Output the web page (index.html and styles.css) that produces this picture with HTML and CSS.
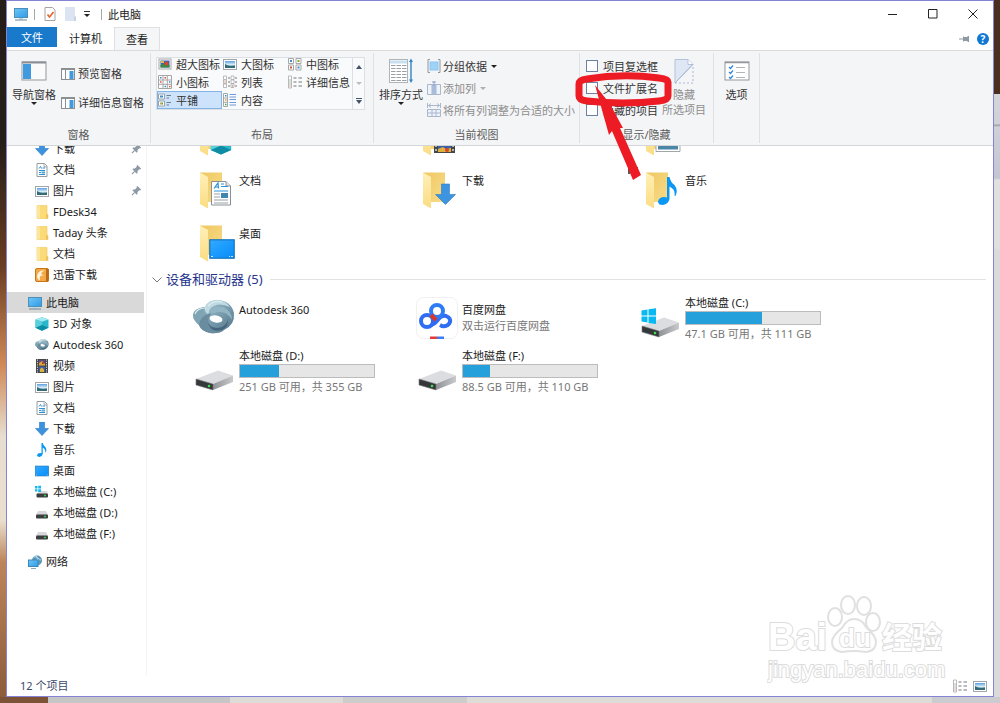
FILE: index.html
```
<!DOCTYPE html>
<html lang="zh-CN">
  <head>
    <meta charset="UTF-8" />
    <meta name="viewport" content="width=device-width, initial-scale=1.0" />
    <title>此电脑</title>
    <link rel="stylesheet" href="styles.css">
  </head>
  <body>
    <!-- Icon sprite -->
    <svg class="sprite" width="0" height="0" aria-hidden="true">
      <defs>
        <linearGradient id="gBlue" x1="0" y1="0" x2="1" y2="1">
          <stop offset="0" stop-color="#6fc6f7" /><stop offset="1" stop-color="#2f9be6" />
        </linearGradient>
        <linearGradient id="gDesk" x1="0" y1="0" x2="1" y2="1">
          <stop offset="0" stop-color="#35aaff" /><stop offset=".5" stop-color="#1a9bff" /><stop offset="1" stop-color="#0a8cf5" />
        </linearGradient>
        <linearGradient id="gFlap" x1="0" y1="0" x2="0" y2="1">
          <stop offset="0" stop-color="#fff0b8" /><stop offset="1" stop-color="#fbdc82" />
        </linearGradient>
        <linearGradient id="gBack" x1="0" y1="0" x2="1" y2="1">
          <stop offset="0" stop-color="#eec762" /><stop offset="1" stop-color="#f9dc88" />
        </linearGradient>
        <linearGradient id="gSteel" x1="0" y1="0" x2="1" y2="1">
          <stop offset="0" stop-color="#b9d5df" /><stop offset=".5" stop-color="#7da2b2" /><stop offset="1" stop-color="#4f7186" />
        </linearGradient>
        <linearGradient id="gSky" x1="0" y1="0" x2="0" y2="1">
          <stop offset="0" stop-color="#5b9fe3" /><stop offset=".5" stop-color="#d3ecf8" /><stop offset="1" stop-color="#3d6f74" />
        </linearGradient>
        <linearGradient id="gSide" x1="0" y1="0" x2="1" y2="0">
          <stop offset="0" stop-color="#8f9296" /><stop offset="1" stop-color="#c8cacc" />
        </linearGradient>
      </defs>

      <symbol id="pc" viewBox="0 0 14 14">
        <rect x="0.5" y="1.5" width="13" height="9" fill="url(#gBlue)" stroke="#4c8fb8" />
        <path d="M5 11h4v1.500H5z" fill="#b9d8ea" /><path d="M1 13h12" stroke="#6f8795" />
      </symbol>
      <symbol id="pin" viewBox="0 0 12 12">
        <path d="M7 1l4 4-1 1-1-.3L7 7.800l.2 1.700-1 1L1.500 5.800l1-1 1.700.2L6.300 3 6 2z" fill="#8d99a5" />
        <path d="M4 8L1 11" stroke="#8d99a5" stroke-width="1.200" />
      </symbol>
      <symbol id="doc" viewBox="0 0 14 14">
        <path d="M2 .5h7.500L12 3v10.500H2z" fill="#fff" stroke="#959ca1" />
        <path d="M9 1v3h3" fill="#e4e7e9" stroke="#959ca1" stroke-width=".7" />
        <path d="M4 5.500l1.500-2 1 2M7.500 5H10M4 7.500h6M4 9.500h2M4 11.500h6" stroke="#2f8fd0" fill="none" />
        <path d="M6.500 8.500h3.500v2H6.500z" fill="#4fa6d8" />
      </symbol>
      <symbol id="pic" viewBox="0 0 14 14">
        <rect x=".5" y="2.500" width="13" height="10" fill="#fff" stroke="#a3a6a8" />
        <rect x="2" y="4" width="10" height="7" fill="url(#gSky)" />
        <path d="M2 7l3 1.500 3 .5 4-.5V11H2z" fill="#356a78" />
      </symbol>
      <symbol id="fold" viewBox="0 0 14 14">
        <path d="M2 .5h10V9l1 .5v4H2z" fill="#fbdb77" stroke="#f0c858" stroke-width=".6" />
        <path d="M2 .5h3v13H2z" fill="#fde69b" /><path d="M11 9.500h2v4h-2z" fill="#eec15a" />
      </symbol>
      <symbol id="thunder" viewBox="0 0 14 14">
        <rect x=".5" y=".5" width="13" height="13" rx="1.500" fill="#f3a948" stroke="#c77717" />
        <path d="M11 1h2.500v12.500H11z" fill="#b96b16" />
        <path d="M9.500 2.500Q3 2 2 8q0 3 3 4.500Q4 9 6 7.500h3Q6.500 6.500 6 5.500 7 3.500 9.500 2.500z" fill="#fff5dc" />
      </symbol>
      <symbol id="cube" viewBox="0 0 14 14">
        <path d="M7 .3L13.500 2.500v8.300L7 13.700.5 10.800V2.500z" fill="#29b7cc" />
        <path d="M7 .3L13.500 2.500 7 4.800.5 2.500z" fill="#a5eaf0" />
        <path d="M.5 2.500L7 4.800v8.900L.5 10.800z" fill="#57d0dd" /><path d="M.5 10.800L7 8l6.500 2.800L7 13.700z" fill="#0d8ca4" />
      </symbol>
      <symbol id="adsk" viewBox="0 0 42 42">
        <path d="M0 18Q1 11 12 10 15 3 25 3q13 1 16 13 1 12-10 17-4 4-14 3-9-2-11-8Q0 23 0 18z" fill="url(#gSteel)" />
        <path d="M0 18Q1 11 12 10q-2 5 2 8-6 2-8 10Q0 23 0 18z" fill="#7fa5b4" />
        <path d="M12 10Q15 3 25 3q8 1 12 7Q24 4 17 12q-2 3 0 6-6-2-5-8z" fill="#bfdae3" />
        <path d="M15 17Q18 8 30 10q9 4 9 13Q34 14 26 15q-5 0-9 4z" fill="#93b5c3" />
        <path d="M6 28q1-10 13-12-6 6-2 12 5 5 14 3-3 6-14 5-9-2-11-8z" fill="#6a8c9f" />
        <path d="M15 26q4 7 14 4 6-3 6-9 1 9-6 12-11 3-14-7z" fill="#45667c" />
        <ellipse cx="23" cy="22" rx="6.500" ry="3.500" fill="#fff" transform="rotate(10 23 22)" />
        <path d="M2 17q2-6 11-6M15 9q6-6 14-4" stroke="#e2f0f4" stroke-width="1.200" fill="none" />
      </symbol>
      <symbol id="film" viewBox="0 0 14 14">
        <rect x="1" y="0" width="12" height="14" fill="#45464a" />
        <path d="M2.500 .5v13M11.500 .5v13" stroke="#d5d6d8" stroke-dasharray="1.200 1.200" />
        <path d="M4 1h6v5.500H4z" fill="#5d4b88" /><path d="M4 7.500h6V13H4z" fill="#3b5fa8" />
        <path d="M4 4l3-2 3 3v1.500H4z" fill="#d8a82e" /><path d="M5 10l2-1.500 2 2V13H5z" fill="#e0b13a" /><path d="M7 3h2v2H7z" fill="#c63d2f" />
      </symbol>
      <symbol id="down" viewBox="0 0 14 14">
        <path d="M4.500 0h5v6.500h4L7 13.500.5 6.500h4z" fill="#3d92dd" stroke="#2c7cc4" stroke-width=".6" />
      </symbol>
      <symbol id="note" viewBox="0 0 20 28">
        <path d="M9 0h2.500q1 5 5 8 4 5 1 11l-1-.5q1-6-5-9V22q-1 5-6.500 6Q0 28 0 24.500 1 20 6 20q2 0 3 .5z" fill="#0b98f5" />
      </symbol>
      <symbol id="desk" viewBox="0 0 26 20">
        <rect x=".8" y=".8" width="24.400" height="18.400" fill="url(#gDesk)" stroke="#1574bd" stroke-width="1.200" />
        <path d="M2 17.500h2M20 17.500h1M22 17.500h2" stroke="#bfe6ff" />
      </symbol>
      <symbol id="sdrive" viewBox="0 0 14 14">
        <path d="M3 5h8l2 4H1z" fill="#d6d8da" /><rect x="1" y="8.500" width="12" height="4" rx="1" fill="#3b3d40" />
        <path d="M9 10.500h2" stroke="#35d044" stroke-width="1.400" />
      </symbol>
      <symbol id="sdrivec" viewBox="0 0 14 14">
        <path d="M4 6h8l1 3H2z" fill="#d6d8da" /><rect x="1.500" y="8.500" width="11.500" height="4" rx="1" fill="#3b3d40" />
        <path d="M9 10.500h2" stroke="#35d044" stroke-width="1.400" />
        <path d="M0 1h2.500v2.500H0zM3.200.8H6v2.700H3.200zM0 4.200h2.500v2.400H0zM3.200 4.200H6V7H3.200z" fill="#16b9ee" />
      </symbol>
      <symbol id="net" viewBox="0 0 14 14">
        <circle cx="9" cy="5.500" r="5" fill="#5a97b8" /><path d="M6 2q3-1 4 1t3 2M8 0q3 5 1 10" stroke="#b6dceb" fill="none" />
        <rect x=".5" y="5" width="9.500" height="6.500" fill="url(#gBlue)" stroke="#3c87bb" /><path d="M3 13.500h5" stroke="#8fa7b3" />
      </symbol>

      <symbol id="bigfolder" viewBox="0 0 42 42">
        <path d="M7 4.500h22V34H12z" fill="url(#gBack)" /><path d="M7 4.500L15 9v31.500L7 36z" fill="url(#gFlap)" />
      </symbol>
      <symbol id="bigdrive" viewBox="0 0 42 42">
        <path d="M3 29l22-8.500 15 5L20 34z" fill="#dcdde0" />
        <path d="M20 34l20-8.500V32L20 40z" fill="url(#gSide)" />
        <path d="M3 29l17 5v6L3 35z" fill="#35383b" stroke="#777" stroke-width=".6" />
        <circle cx="16" cy="36" r="1.300" fill="#3fe04c" />
      </symbol>

      <!-- Ribbon icons -->
      <symbol id="thumb" viewBox="0 0 14 14">
        <path d="M.5 1.500h5v5h-5zM.5 8h5v5h-5zM8 1.500h5v5H8zM8 8h5v5H8z" fill="#fff" stroke="#a6a6a6" />
        <path d="M2 3h2v2H2zM9.500 9.500h2v2h-2z" fill="#3a8fc8" /><path d="M2 9.500h2v2H2z" fill="#d3503b" /><path d="M9.500 3h2v2h-2z" fill="#8aa43b" />
      </symbol>
      <symbol id="smalls" viewBox="0 0 14 14">
        <path d="M.5.500h13v13H.5zM5 .5v13M9.300.5v13M.5 5h13M.5 9.300h13" fill="#fff" stroke="#a6a6a6" />
        <path d="M2 2.800h1.500M11 7h1.500M6.500 11.500H8" stroke="#3a8fc8" stroke-width="1.500" /><path d="M6.500 2.800H8M2 7h1.500M11 11.500h1.500" stroke="#d3503b" stroke-width="1.500" />
      </symbol>
      <symbol id="list" viewBox="0 0 14 14">
        <path d="M.5 1h3v3.500h-3zM.5 5h3v3.500h-3zM.5 9h3v3.500h-3zM8 1h3v3.500H8zM8 5h3v3.500H8zM8 9h3v3.500H8z" fill="#fff" stroke="#a9a9a9" stroke-width=".8" />
        <path d="M5 3h2M5 7h2M5 11h2M12 3h2M12 7h2M12 11h2" stroke="#777" /><path d="M1.500 7h1M9 11h1" stroke="#d3503b" />
      </symbol>
      <symbol id="details" viewBox="0 0 14 14">
        <path d="M.5 1h3v12h-3zM.5 5h3M.5 9h3" fill="#fff" stroke="#a9a9a9" stroke-width=".8" />
        <path d="M5.500 3h3M10.500 3H14M5.500 7h3M10.500 7H14M5.500 11h3M10.500 11H14" stroke="#777" /><path d="M1.500 7h1" stroke="#4fa24f" /><path d="M1.500 11h1" stroke="#d3503b" />
      </symbol>
      <symbol id="tiles" viewBox="0 0 14 14">
        <path d="M.5 1h6v5h-6zM.5 8h6v5h-6z" fill="#fff" stroke="#9aa3ab" /><path d="M2 2.500h3v2H2z" fill="#3a8fc8" /><path d="M2 9.500h1.500v2H2z" fill="#d3a12c" /><path d="M3.500 9.500H5v2H3.500z" fill="#4fa24f" />
        <path d="M8.500 2.500H13M8.500 5H11M8.500 9.500H13M8.500 12H11" stroke="#6f7e8c" />
      </symbol>
      <symbol id="contents" viewBox="0 0 14 14">
        <path d="M.5.500h4v13h-4zM.5 5h4M.5 9.300h4" fill="#fff" stroke="#a6a6a6" /><path d="M2 2.800h1.500" stroke="#3a8fc8" stroke-width="1.500" /><path d="M2 7h1.500" stroke="#d3a12c" stroke-width="1.500" /><path d="M2 11.500h1.500" stroke="#4fa24f" stroke-width="1.500" />
        <path d="M6.500 1.500H13M6.500 4H13M6.500 6.500H13M6.500 9.500H13M6.500 12H13" stroke="#5b8fd8" stroke-width=".9" />
      </symbol>
      <symbol id="xlarge" viewBox="0 0 14 14">
        <rect x="1" y="2" width="12" height="10" fill="#fff" stroke="#a6a6a6" /><rect x="2.500" y="3.500" width="9" height="7" fill="#3f62b5" />
        <path d="M2.500 8l5-2 4 2v2.500h-9z" fill="#3c8b42" /><circle cx="8.500" cy="6.500" r="2" fill="#d9432f" /><path d="M3 4h3v2H3z" fill="#e5bb3f" />
      </symbol>
      <symbol id="preview" viewBox="0 0 14 14">
        <rect x=".5" y="1.500" width="13" height="11" fill="#fff" stroke="#8a8f94" /><path d="M.5 2.500h13M4.500 2v10" stroke="#8a8f94" /><path d="M8.500 4h4v8h-4z" fill="#3f9ae0" />
      </symbol>
    </svg>

    <div class="window">
      <header class="titlebar">
        <svg class="icon"><use href="#pc" /></svg>
        <span class="divider"></span>
        <button class="quick" aria-label="属性">
          <svg class="icon" viewBox="0 0 14 14"><path d="M2 .5h7.500L12 3v10.500H2z" fill="#fff" stroke="#a5a5a5" /><path d="M4.500 7.500l2 2.500 4-5" stroke="#e8622d" stroke-width="1.600" fill="none" /></svg>
        </button>
        <button class="quick" aria-label="新建文件夹">
          <svg class="icon" viewBox="0 0 14 14"><path d="M2 0h10v9l1 .5V14H2z" fill="#dce4f1" /><path d="M11 9.500h2V14h-2z" fill="#c8d3e6" /></svg>
        </button>
        <button class="quick" aria-label="自定义快速访问工具栏">
          <svg width="8" height="8" viewBox="0 0 8 8"><path d="M1 1.500h6" stroke="#333" /><path d="M1 4h6L4 7z" fill="#222" /></svg>
        </button>
        <span class="divider"></span>
        <span class="title">此电脑</span>
        <div class="controls">
          <button aria-label="最小化"><svg width="10" height="10"><path d="M0 5.500h9" stroke="#222" /></svg></button>
          <button aria-label="最大化"><svg width="10" height="10"><path d="M.5.500h8.500v8.500H.5z" fill="none" stroke="#222" /></svg></button>
          <button aria-label="关闭"><svg width="10" height="10"><path d="M.5.500l9 9M9.500.5l-9 9" stroke="#222" /></svg></button>
        </div>
      </header>

      <nav class="tabs">
        <button class="tab file">文件</button>
        <button class="tab computer">计算机</button>
        <button class="tab view">查看</button>
        <div class="tab-tools">
          <button aria-label="固定功能区"><svg width="11" height="8"><path d="M0 4h5" stroke="#8d99a5" /><path d="M4 1l1 1h3l1-1h1v6H9L8 6H5L4 7z" fill="#8d99a5" /></svg></button>
          <button class="help" aria-label="帮助">?</button>
        </div>
      </nav>

      <section class="ribbon">
        <div class="group">
          <div class="group-body">
            <button class="big">
              <svg width="26" height="30" viewBox="0 0 26 30"><rect x="1" y="5" width="24" height="18" fill="#fafafa" stroke="#93979b" /><path d="M1 5.500h24" stroke="#8a8f94" stroke-width="2" /><path d="M2 7h8v15H2z" fill="#3f9ae0" /></svg>
              <span>导航窗格</span><i class="caret"></i>
            </button>
            <div class="stack panes">
              <button class="small"><svg class="icon"><use href="#preview" /></svg>预览窗格</button>
              <button class="small"><svg class="icon"><use href="#preview" /></svg>详细信息窗格</button>
            </div>
          </div>
          <div class="group-name">窗格</div>
        </div>

        <div class="group">
          <div class="group-body">
            <div class="gallery">
              <div class="gallery-items">
                <button><svg class="icon"><use href="#xlarge" /></svg>超大图标</button>
                <button><svg class="icon"><use href="#pic" /></svg>大图标</button>
                <button><svg class="icon"><use href="#thumb" /></svg>中图标</button>
                <button><svg class="icon"><use href="#smalls" /></svg>小图标</button>
                <button><svg class="icon"><use href="#list" /></svg>列表</button>
                <button><svg class="icon"><use href="#details" /></svg>详细信息</button>
                <button class="active"><svg class="icon"><use href="#tiles" /></svg>平铺</button>
                <button><svg class="icon"><use href="#contents" /></svg>内容</button>
              </div>
              <div class="gallery-scroll">
                <button aria-label="向上"><svg width="6" height="4"><path d="M0 4l3-4 3 4z" fill="#44546a" /></svg></button>
                <button aria-label="向下"><svg width="6" height="4"><path d="M0 0h6L3 3z" fill="#b9bec5" /></svg></button>
                <button aria-label="更多"><svg width="6" height="6"><path d="M0 .5h6" stroke="#44546a" /><path d="M0 2h6L3 6z" fill="#44546a" /></svg></button>
              </div>
            </div>
          </div>
          <div class="group-name">布局</div>
        </div>

        <div class="group">
          <div class="group-body">
            <button class="big">
              <svg width="24" height="30" viewBox="0 0 24 30">
                <rect x=".5" y="2.500" width="18" height="23" fill="#fff" stroke="#b0b4b7" />
                <path d="M1 5h17" stroke="#c8dfef" stroke-width="3" />
                <path d="M2 8.500h4.500M7.500 8.500H12M13 8.500h4.500M2 11.500h4.500M7.500 11.500H12M13 11.500h4.500M2 14.500h4.500M7.500 14.500H12M13 14.500h4.500M2 17.500h4.500M7.500 17.500H12M13 17.500h4.500M2 20.500h4.500M7.500 20.500H12M13 20.500h4.500M2 23.500h4.500M7.500 23.500H12M13 23.500h4.500" stroke="#9aa1a6" />
                <path d="M22 4v20" stroke="#2f86c9" stroke-width="1.400" /><path d="M22 1.500l2 3.500h-4zM22 26l2-3.500h-4z" fill="#2f86c9" />
              </svg>
              <span>排序方式</span><i class="caret"></i>
            </button>
            <div class="stack sorting">
              <button class="small"><svg class="icon" viewBox="0 0 14 14"><path d="M3 .5H1v13h2M11 .5h2v13h-2" fill="none" stroke="#8f979d" /><rect x="3" y="3" width="8" height="8" fill="#9fd2f7" stroke="#8cc6f0" /></svg>分组依据<i class="caret"></i></button>
              <button class="small" disabled><svg class="icon" viewBox="0 0 14 14"><path d="M.5 3.500h13v10H.5zM5 3v10M9 3v10" fill="#eef2f9" stroke="#a9b7cf" /><path d="M5 4h4v9H5z" fill="#a9bcdb" /><path d="M7 0v5M5 1h4" stroke="#8fa5ca" /></svg>添加列<i class="caret"></i></button>
              <button class="small" disabled><svg class="icon" viewBox="0 0 14 14"><path d="M.5 0v5M13.500 0v5M1 2.500h12M4 .5l-2.500 2L4 4.500M10 .5l2.500 2-2.500 2" fill="none" stroke="#a9b7cf" /><path d="M.5 6.500h13v7H.5zM5 6.500v7M9 6.500v7M.5 10h13" fill="#eef2f9" stroke="#a9b7cf" /></svg>将所有列调整为合适的大小</button>
            </div>
          </div>
          <div class="group-name">当前视图</div>
        </div>

        <div class="group">
          <div class="group-body">
            <div class="stack checks">
              <label><input type="checkbox" />项目复选框</label>
              <label><input type="checkbox" />文件扩展名</label>
              <label><input type="checkbox" />隐藏的项目</label>
            </div>
            <button class="big" disabled>
              <svg width="20" height="30" viewBox="0 0 20 30"><path d="M1 2.500h13l5 5L1 26z" fill="#dfe7f5" stroke="#b4c3dd" /><path d="M14 2.500v5h5" fill="#fff" stroke="#b4c3dd" /><path d="M1 26h18V8" fill="none" stroke="#a9b9d6" stroke-dasharray="2 2" /><path d="M1 26L19 7" stroke="#a9b9d6" /></svg>
              <span>隐藏<br />所选项目</span>
            </button>
          </div>
          <div class="group-name">显示/隐藏</div>
        </div>

        <div class="group">
          <div class="group-body options">
            <button class="big">
              <svg width="26" height="30" viewBox="0 0 26 30"><rect x="1" y="5" width="24" height="18" fill="#fff" stroke="#93979b" /><path d="M1 5.500h24" stroke="#93979b" stroke-width="1.500" /><path d="M5 10l1.500 1.500L9 8.500M5 15l1.500 1.500L9 13.500M5 20l1.500 1.500L9 18.500" stroke="#2f86d9" stroke-width="1.200" fill="none" /><path d="M12 10.500h9M12 15.500h9M12 20.500h9" stroke="#b4b4b4" /></svg>
              <span>选项</span>
            </button>
          </div>
        </div>
      </section>

      <div class="content">
        <nav class="sidebar">
          <ul>
            <li><a href="#"><svg class="icon"><use href="#down" /></svg>下载<svg class="pin"><use href="#pin" /></svg></a></li>
            <li><a href="#"><svg class="icon"><use href="#doc" /></svg>文档<svg class="pin"><use href="#pin" /></svg></a></li>
            <li><a href="#"><svg class="icon"><use href="#pic" /></svg>图片<svg class="pin"><use href="#pin" /></svg></a></li>
            <li><a href="#"><svg class="icon"><use href="#fold" /></svg>FDesk34</a></li>
            <li><a href="#"><svg class="icon"><use href="#fold" /></svg>Taday 头条</a></li>
            <li><a href="#"><svg class="icon"><use href="#fold" /></svg>文档</a></li>
            <li><a href="#"><svg class="icon"><use href="#thunder" /></svg>迅雷下载</a></li>
          </ul>
          <ul>
            <li><a class="root selected" href="#"><svg class="icon"><use href="#pc" /></svg>此电脑</a></li>
            <li><a href="#"><svg class="icon"><use href="#cube" /></svg>3D 对象</a></li>
            <li><a href="#"><svg class="icon"><use href="#adsk" /></svg>Autodesk 360</a></li>
            <li><a href="#"><svg class="icon"><use href="#film" /></svg>视频</a></li>
            <li><a href="#"><svg class="icon"><use href="#pic" /></svg>图片</a></li>
            <li><a href="#"><svg class="icon"><use href="#doc" /></svg>文档</a></li>
            <li><a href="#"><svg class="icon"><use href="#down" /></svg>下载</a></li>
            <li><a href="#"><svg class="icon"><use href="#note" /></svg>音乐</a></li>
            <li><a href="#"><svg class="icon"><use href="#desk" /></svg>桌面</a></li>
            <li><a href="#"><svg class="icon"><use href="#sdrivec" /></svg>本地磁盘 (C:)</a></li>
            <li><a href="#"><svg class="icon"><use href="#sdrive" /></svg>本地磁盘 (D:)</a></li>
            <li><a href="#"><svg class="icon"><use href="#sdrive" /></svg>本地磁盘 (F:)</a></li>
          </ul>
          <ul>
            <li><a class="root" href="#"><svg class="icon"><use href="#net" /></svg>网络</a></li>
          </ul>
        </nav>

        <main class="files">
          <div class="tiles folders">
            <a class="tile" href="#" aria-label="3D 对象">
              <svg viewBox="0 0 42 42"><use href="#bigfolder" /><use href="#cube" x="17" y="18" width="22" height="22" /></svg>
            </a>
            <a class="tile" href="#" aria-label="视频">
              <svg viewBox="0 0 42 42"><use href="#bigfolder" /><path d="M18 17h21v21H18z" fill="#45464a" /><path d="M20 18v20M37 18v20" stroke="#d5d6d8" stroke-width="1.500" stroke-dasharray="2 2" /><path d="M22 18h13v19H22z" fill="#3b5fa8" /><path d="M22 37v-3l5-2 3 2 5-1v4z" fill="#e0b13a" /><circle cx="31" cy="35" r="2" fill="#d9432f" /></svg>
            </a>
            <a class="tile" href="#" aria-label="图片">
              <svg viewBox="0 0 42 42"><use href="#bigfolder" /><path d="M17 19h24v17.500H17z" fill="#fff" stroke="#a3a6a8" /><path d="M19 21h20v13.500H19z" fill="#4b86a6" /></svg>
            </a>
            <a class="tile" href="#">
              <svg viewBox="0 0 42 42"><use href="#bigfolder" /><path d="M18.500 13.500H33l4.500 4.500v19h-19z" fill="#fff" stroke="#8b9094" /><path d="M33 13.500V18h4.500" fill="#e4e7e9" stroke="#8b9094" /><path d="M21 20.500l4-5.500.5 5.500M22.500 19H25M28 16h3M28 18.500h7M21 23h14" fill="none" stroke="#2b93d6" stroke-width="1.200" /><path d="M28 25h7v5h-7z" fill="#3f86b4" /><path d="M21 26h6M21 29h6M21 32h14M21 35h14" stroke="#9aa0a4" /></svg>
              <span class="info"><span class="name">文档</span></span>
            </a>
            <a class="tile" href="#">
              <svg viewBox="0 0 42 42"><use href="#bigfolder" /><path d="M25.500 16h8v10.500h6L29.500 36.500l-10-10h6z" fill="#3d94e0" stroke="#2c7cc4" stroke-width=".6" /></svg>
              <span class="info"><span class="name">下载</span></span>
            </a>
            <a class="tile" href="#">
              <svg viewBox="0 0 42 42"><use href="#bigfolder" /><use href="#note" x="19" y="9" width="20" height="28" /></svg>
              <span class="info"><span class="name">音乐</span></span>
            </a>
            <a class="tile" href="#">
              <svg viewBox="0 0 42 42"><use href="#bigfolder" /><use href="#desk" x="16" y="18" width="26" height="20" /></svg>
              <span class="info"><span class="name">桌面</span></span>
            </a>
          </div>

          <h2 class="section">
            <button aria-label="折叠"><svg width="10" height="6"><path d="M.5.500L5 5 9.500.5" fill="none" stroke="#777" /></svg></button>
            设备和驱动器 (5)
          </h2>

          <div class="tiles">
            <a class="tile" href="#">
              <svg><use href="#adsk" /></svg>
              <span class="info"><span class="name">Autodesk 360</span></span>
            </a>
            <a class="tile" href="#">
              <svg viewBox="0 0 42 42">
                <rect x=".5" y=".5" width="41" height="41" rx="7" fill="#fff" stroke="#f0f0f0" />
                <g fill="none" stroke-width="4">
                  <circle cx="11" cy="24" r="6" stroke="#2f6df2" />
                  <path d="M15 28q4-1 6-4 4-6 9-5 5 2 4 6-2 5-8 4l-2-1" stroke="#2f6df2" />
                  <circle cx="21" cy="14" r="6" stroke="#2f7bf6" />
                  <path d="M15 18l5 5" stroke="#d9372c" />
                </g>
                <path d="M14 39.500h7V42h-7z" fill="#e23a34" /><path d="M21 39.500h7V42h-7z" fill="#3d7cf5" />
              </svg>
              <span class="info"><span class="name">百度网盘</span><span class="sub">双击运行百度网盘</span></span>
            </a>
            <a class="tile" href="#">
              <svg viewBox="0 0 42 42"><use href="#bigdrive" /><path d="M2.500 13.500l6-1V18.500h-6zM9.500 12.300l7.500-1v7.200H9.500zM2.500 19.500h6v6l-6-1zM9.500 19.500H17V27l-7.500-1z" fill="#08b9f2" /></svg>
              <span class="info drive"><span class="name">本地磁盘 (C:)</span><span class="bar"><span class="fill" style="width: 57%"></span></span><span class="sub">47.1 GB 可用，共 111 GB</span></span>
            </a>
            <a class="tile" href="#">
              <svg><use href="#bigdrive" /></svg>
              <span class="info drive"><span class="name">本地磁盘 (D:)</span><span class="bar"><span class="fill" style="width: 29%"></span></span><span class="sub">251 GB 可用，共 355 GB</span></span>
            </a>
            <a class="tile" href="#">
              <svg><use href="#bigdrive" /></svg>
              <span class="info drive"><span class="name">本地磁盘 (F:)</span><span class="bar"><span class="fill" style="width: 20%"></span></span><span class="sub">88.5 GB 可用，共 110 GB</span></span>
            </a>
          </div>
        </main>
      </div>

      <footer class="status">
        <span>12 个项目</span>
        <div class="view-switch">
          <button aria-label="详细信息"><svg class="icon"><use href="#details" /></svg></button>
          <button aria-label="大图标"><svg class="icon"><use href="#pic" /></svg></button>
        </div>
      </footer>
    </div>

    <!-- Red marker around the file extension option -->
    <svg class="marker" width="110" height="115" viewBox="0 0 110 115" aria-hidden="true">
      <path d="M54 98v6M58 98h5M61 99v4" stroke="#222" stroke-width="1.500" />
      <path d="M12 9Q48 3 84 8q9 1 9 4v14q0 4-9 5-36 4-72 0-8-1-8-5V14q0-4 8-5z" fill="none" stroke="#ed1c24" stroke-width="7" />
      <path d="M20 15l15 19 13 24h-3l21 47-8 5-21-49-3 4z" fill="#ed1c24" />
    </svg>

    <svg class="watermark" width="182" height="92" viewBox="0 0 182 92" aria-hidden="true">
      <g fill="#fff" stroke="#e0e0e0" stroke-width="2">
        <ellipse cx="68" cy="23" rx="7" ry="9" />
        <ellipse cx="81" cy="11" rx="7" ry="9" />
        <ellipse cx="97" cy="12" rx="7" ry="9" />
        <ellipse cx="106" cy="28" rx="7" ry="9" />
        <path d="M87 25q8 0 12 8 10 9 10 15 0 9-10 10-12-2-24 0-10-1-10-10 0-6 10-14 5-9 12-9z" />
      </g>
      <text class="mark-latin" x="1" y="56">Bai</text>
      <text class="mark-du" x="72" y="53">du</text>
      <text class="mark-cjk" x="115" y="54">经验</text>
      <text class="mark-url" x="1" y="83">jingyan.baidu.com</text>
    </svg>
  </body>
</html>
```

FILE: styles.css
```
* {
  box-sizing: border-box;
}
body {
  margin: 0;
  height: 100vh;
  padding: 0 6px 6px;
  position: relative;
  overflow: hidden;
  font-family: "Noto Sans", "Noto Sans CJK SC", sans-serif;
  font-size: 11px;
  line-height: 15px;
  color: #1a1a1a;
  background:
    linear-gradient(90deg, #7d5338 48px, #c6c6c6 48px, #c6c6c6 230px, #dddcd6 230px, #dddcd6 343px, #cccccb 343px, #cccccb 467px, #dddcd6 467px, #dddcd6 932px, #cbccd0 932px) left bottom / 100% 6px no-repeat,
    linear-gradient(#241d19 0, #241d19 20%, #6b3e22 38%, #d08a58 52%, #e6ded0 62%, #e9dfcf 74%, #bd8459 80%, #8a5a3a 100%) left top / 6px 100% no-repeat,
    linear-gradient(#4a2e20 94px, #d4d5d9 94px, #d0d1d7 124px, #9a9da3 125px, #cfd0d8 127px, #c3c6d2 178px, #e0e0de 180px, #e0e0de 248px, #dadada 250px) right top / 6px 100% no-repeat;
}
button {
  border: 0;
  padding: 0;
  background: none;
  font: inherit;
  color: inherit;
}
a {
  color: inherit;
  text-decoration: none;
}
svg {
  flex: none;
  display: block;
}
.sprite {
  position: absolute;
}
.icon {
  width: 14px;
  height: 14px;
}
.caret {
  border: 3px solid transparent;
  border-top-color: #222;
  border-bottom: 0;
}

.window {
  height: 100%;
  display: flex;
  flex-direction: column;
  background: #fff;
  border: 1px solid #8583d6;
}

/* Title bar */
.titlebar {
  display: flex;
  align-items: center;
  height: 26px;
  padding-left: 7px;
}
.titlebar .divider {
  width: 1px;
  height: 11px;
  margin: 0 6px;
  background: #a8a8a8;
}
.quick {
  margin-left: 2px;
  margin-right: 4px;
}
.controls {
  display: flex;
  margin-left: auto;
  align-self: stretch;
}
.controls button {
  width: 40px;
  display: grid;
  place-items: center;
}

/* Tabs */
.tabs {
  display: flex;
  height: 23px;
}
.tab {
  padding: 0 13px;
}
.file {
  height: 20px;
  padding: 0 14px;
  color: #fff;
  background: #1979ca;
}
.computer {
  padding: 0 12px;
}
.view {
  border: 1px solid #dfe0e2;
  border-bottom: 0;
  padding: 0 11px;
  background: #f5f6f7;
}
.tab-tools {
  display: flex;
  align-items: center;
  gap: 7px;
  margin-left: auto;
  padding-right: 4px;
}
.help {
  width: 12px;
  height: 12px;
  border-radius: 50%;
  background: #0f78d4;
  color: #fff;
  font-size: 10px;
  font-weight: bold;
  line-height: 12px;
}

/* Ribbon */
.ribbon {
  display: grid;
  grid-template-columns: 144px 223px 206px 134px 46px;
  height: 96px;
  padding: 2px 0;
  color: #333;
  background: #f4f5f7;
  border-top: 1px solid #dadbdc;
  border-bottom: 1px solid #d4d5d7;
}
.group {
  display: flex;
  flex-direction: column;
  padding-top: 2px;
  border-right: 1px solid #e0e1e3;
  white-space: nowrap;
}
.group-body {
  display: flex;
  padding: 0 5px;
}
.group-name {
  margin-top: auto;
  line-height: 17px;
  text-align: center;
  color: #5a5a5a;
}
.big {
  display: flex;
  flex-direction: column;
  align-items: center;
  align-self: flex-start;
  min-width: 44px;
  padding-top: 2px;
}
.stack {
  display: flex;
  flex-direction: column;
  margin-left: 5px;
}
.sorting {
  margin-left: 4px;
}
.small,
.checks label {
  display: flex;
  align-items: center;
  gap: 3px;
  height: 22px;
}
.sorting .small {
  gap: 2px;
}
.small .caret {
  margin-left: 2px;
}
.panes {
  padding-top: 4px;
}
.panes .small {
  height: 29px;
}
button:disabled {
  color: #8d8d8d;
}
button:disabled .caret {
  border-top-color: #b0b0b0;
}
.checks {
  margin-left: 1px;
  margin-right: 4px;
}
.checks label {
  gap: 5px;
}
.checks input {
  appearance: none;
  width: 12px;
  height: 12px;
  margin: 0;
  background: #fff;
  border: 1px solid #6d7fa3;
}
.options {
  justify-content: center;
  padding: 0;
}
.gallery {
  display: flex;
  flex: 1;
  height: 53px;
  margin-top: 2px;
  margin-right: 3px;
  border: 1px solid #dcdfe4;
  background: #f9fafb;
  overflow: hidden;
}
.gallery-items {
  flex: 1;
  display: grid;
  grid-template-columns: repeat(3, 1fr);
  grid-auto-rows: 18px;
  align-content: end;
}
.gallery-items button {
  display: flex;
  align-items: center;
  gap: 4px;
  padding-left: 1px;
}
.gallery-items .active {
  padding-left: 0;
  background: #cce3fb;
  border: 1px solid #84b4e6;
}
.gallery-scroll {
  display: grid;
  grid-template-rows: repeat(3, 1fr);
  width: 12px;
  border-left: 1px solid #dcdfe4;
}
.gallery-scroll button {
  display: grid;
  place-items: center;
}

/* Content */
.content {
  flex: 1;
  min-height: 0;
  display: flex;
  overflow: hidden;
}
.sidebar {
  width: 140px;
  border-right: 1px solid #f4f4f4;
}
.sidebar ul {
  list-style: none;
  margin: 0 0 7px;
  padding: 0;
}
.sidebar ul:first-child {
  margin-top: -8px;
}
.sidebar a {
  display: flex;
  align-items: center;
  gap: 4px;
  height: 21px;
  margin-right: 2px;
  padding-left: 28px;
}
.sidebar .root {
  padding-left: 21px;
}
.sidebar .selected {
  background: #d9d9d9;
}
.pin {
  width: 11px;
  height: 11px;
  margin-left: auto;
  margin-right: 2px;
}
.files {
  flex: 1;
  min-width: 0;
}
.tiles {
  display: grid;
  grid-template-columns: repeat(auto-fill, 223px);
  grid-auto-rows: 53px;
  padding-left: 46px;
}
.folders {
  margin-top: -37px;
}
.tile {
  display: flex;
  align-items: center;
  gap: 4px;
}
.tile > svg {
  width: 42px;
  height: 42px;
}
.info {
  display: flex;
  flex-direction: column;
  min-height: 32px;
  line-height: 16px;
}
.drive {
  width: 136px;
  line-height: 15px;
  white-space: nowrap;
}
.sub {
  color: #777;
}
.bar {
  height: 14px;
  margin: 1px 0;
  border: 1px solid #bcbcbc;
  background: #e6e6e6;
}
.fill {
  display: block;
  height: 100%;
  background: #26a0da;
}
.section {
  display: flex;
  align-items: center;
  gap: 4px;
  height: 23px;
  margin: 0 7px 0 5px;
  font-size: 13px;
  font-weight: normal;
  color: #27348b;
}
.section::after {
  content: "";
  flex: 1;
  height: 1px;
  margin-left: 3px;
  background: #e2e2e2;
}

/* Status bar */
.status {
  display: flex;
  align-items: center;
  justify-content: space-between;
  height: 21px;
  padding: 0 6px 0 13px;
  color: #3b4a6b;
}
.view-switch {
  display: flex;
  gap: 6px;
}

.marker {
  position: absolute;
  left: 575px;
  top: 70px;
}

.watermark {
  position: absolute;
  right: 51px;
  bottom: 17px;
}
.watermark text {
  fill: #fff;
  stroke: #dcdcdc;
  stroke-width: 2px;
  paint-order: stroke;
}
.mark-latin {
  font: bold 38px "Liberation Sans", sans-serif;
}
.mark-du {
  font: bold 26px "Liberation Sans", sans-serif;
}
.mark-cjk {
  font: bold 30px "Noto Sans CJK SC", sans-serif;
}
.mark-url {
  font: 22px "Liberation Sans", sans-serif;
}
```
